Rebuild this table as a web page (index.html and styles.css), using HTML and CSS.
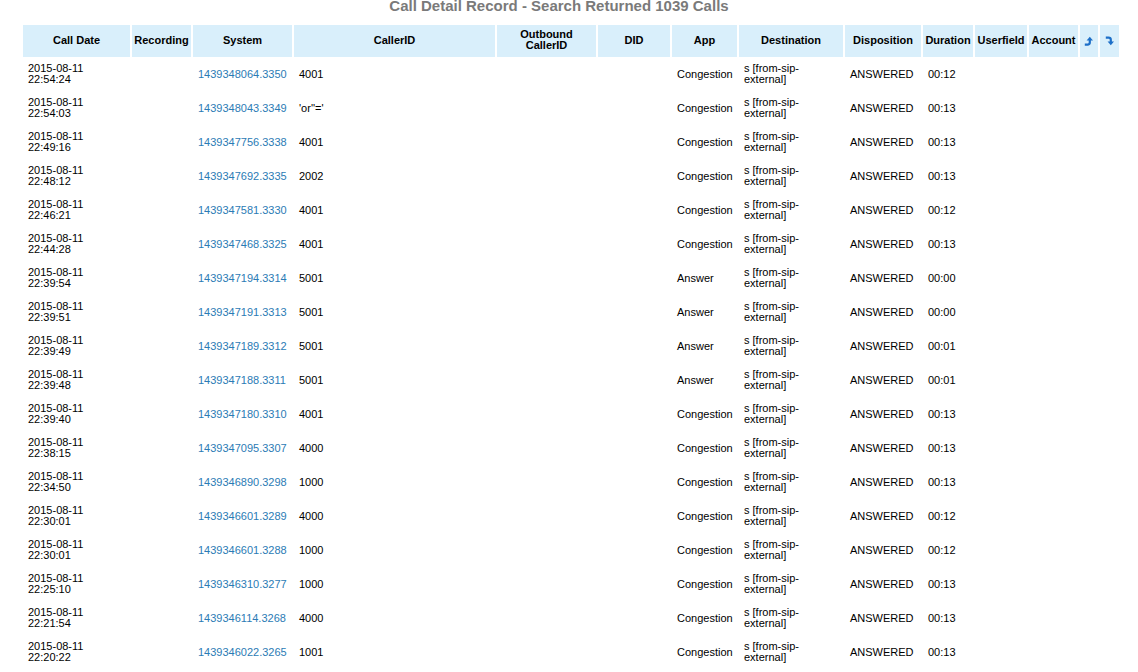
FILE: index.html
```html
<!DOCTYPE html>
<html>
<head>
<meta charset="utf-8">
<title>Call Detail Record</title>
<link rel="stylesheet" href="styles.css">
</head>
<body>
<div class="page">
  <div class="page-title">Call Detail Record - Search Returned 1039 Calls</div>
  <table class="cdr">
    <thead>
      <tr>
        <th class="c-date">Call Date</th>
        <th class="c-rec">Recording</th>
        <th class="c-sys">System</th>
        <th class="c-cid">CallerID</th>
        <th class="c-out">Outbound CallerID</th>
        <th class="c-did">DID</th>
        <th class="c-app">App</th>
        <th class="c-dst">Destination</th>
        <th class="c-disp">Disposition</th>
        <th class="c-dur">Duration</th>
        <th class="c-uf">Userfield</th>
        <th class="c-acc">Account</th>
        <th class="c-ico"><svg class="sort-icon" width="10" height="10" viewBox="0 0 10 10"><path d="M0.8 8.6 L3.6 8.6 Q5.8 8.6 5.8 6.4 L5.8 4" fill="none" stroke="#1d6fc8" stroke-width="2.2"/><path d="M2.6 4.6 L5.8 0.8 L9 4.6 Z" fill="#1d6fc8"/></svg></th>
        <th class="c-ico"><svg class="sort-icon" width="10" height="10" viewBox="0 0 10 10"><path d="M0.8 1.6 L3.6 1.6 Q5.8 1.6 5.8 3.8 L5.8 6" fill="none" stroke="#1d6fc8" stroke-width="2.2"/><path d="M2.6 5.4 L5.8 9.2 L9 5.4 Z" fill="#1d6fc8"/></svg></th>
      </tr>
    </thead>
    <tbody>
      <tr><td>2015-08-11 22:54:24</td><td></td><td><a href="#">1439348064.3350</a></td><td>4001</td><td></td><td></td><td>Congestion</td><td>s [from-sip-external]</td><td>ANSWERED</td><td>00:12</td><td></td><td></td><td></td><td></td></tr>
      <tr><td>2015-08-11 22:54:03</td><td></td><td><a href="#">1439348043.3349</a></td><td>'or''='</td><td></td><td></td><td>Congestion</td><td>s [from-sip-external]</td><td>ANSWERED</td><td>00:13</td><td></td><td></td><td></td><td></td></tr>
      <tr><td>2015-08-11 22:49:16</td><td></td><td><a href="#">1439347756.3338</a></td><td>4001</td><td></td><td></td><td>Congestion</td><td>s [from-sip-external]</td><td>ANSWERED</td><td>00:13</td><td></td><td></td><td></td><td></td></tr>
      <tr><td>2015-08-11 22:48:12</td><td></td><td><a href="#">1439347692.3335</a></td><td>2002</td><td></td><td></td><td>Congestion</td><td>s [from-sip-external]</td><td>ANSWERED</td><td>00:13</td><td></td><td></td><td></td><td></td></tr>
      <tr><td>2015-08-11 22:46:21</td><td></td><td><a href="#">1439347581.3330</a></td><td>4001</td><td></td><td></td><td>Congestion</td><td>s [from-sip-external]</td><td>ANSWERED</td><td>00:12</td><td></td><td></td><td></td><td></td></tr>
      <tr><td>2015-08-11 22:44:28</td><td></td><td><a href="#">1439347468.3325</a></td><td>4001</td><td></td><td></td><td>Congestion</td><td>s [from-sip-external]</td><td>ANSWERED</td><td>00:13</td><td></td><td></td><td></td><td></td></tr>
      <tr><td>2015-08-11 22:39:54</td><td></td><td><a href="#">1439347194.3314</a></td><td>5001</td><td></td><td></td><td>Answer</td><td>s [from-sip-external]</td><td>ANSWERED</td><td>00:00</td><td></td><td></td><td></td><td></td></tr>
      <tr><td>2015-08-11 22:39:51</td><td></td><td><a href="#">1439347191.3313</a></td><td>5001</td><td></td><td></td><td>Answer</td><td>s [from-sip-external]</td><td>ANSWERED</td><td>00:00</td><td></td><td></td><td></td><td></td></tr>
      <tr><td>2015-08-11 22:39:49</td><td></td><td><a href="#">1439347189.3312</a></td><td>5001</td><td></td><td></td><td>Answer</td><td>s [from-sip-external]</td><td>ANSWERED</td><td>00:01</td><td></td><td></td><td></td><td></td></tr>
      <tr><td>2015-08-11 22:39:48</td><td></td><td><a href="#">1439347188.3311</a></td><td>5001</td><td></td><td></td><td>Answer</td><td>s [from-sip-external]</td><td>ANSWERED</td><td>00:01</td><td></td><td></td><td></td><td></td></tr>
      <tr><td>2015-08-11 22:39:40</td><td></td><td><a href="#">1439347180.3310</a></td><td>4001</td><td></td><td></td><td>Congestion</td><td>s [from-sip-external]</td><td>ANSWERED</td><td>00:13</td><td></td><td></td><td></td><td></td></tr>
      <tr><td>2015-08-11 22:38:15</td><td></td><td><a href="#">1439347095.3307</a></td><td>4000</td><td></td><td></td><td>Congestion</td><td>s [from-sip-external]</td><td>ANSWERED</td><td>00:13</td><td></td><td></td><td></td><td></td></tr>
      <tr><td>2015-08-11 22:34:50</td><td></td><td><a href="#">1439346890.3298</a></td><td>1000</td><td></td><td></td><td>Congestion</td><td>s [from-sip-external]</td><td>ANSWERED</td><td>00:13</td><td></td><td></td><td></td><td></td></tr>
      <tr><td>2015-08-11 22:30:01</td><td></td><td><a href="#">1439346601.3289</a></td><td>4000</td><td></td><td></td><td>Congestion</td><td>s [from-sip-external]</td><td>ANSWERED</td><td>00:12</td><td></td><td></td><td></td><td></td></tr>
      <tr><td>2015-08-11 22:30:01</td><td></td><td><a href="#">1439346601.3288</a></td><td>1000</td><td></td><td></td><td>Congestion</td><td>s [from-sip-external]</td><td>ANSWERED</td><td>00:12</td><td></td><td></td><td></td><td></td></tr>
      <tr><td>2015-08-11 22:25:10</td><td></td><td><a href="#">1439346310.3277</a></td><td>1000</td><td></td><td></td><td>Congestion</td><td>s [from-sip-external]</td><td>ANSWERED</td><td>00:13</td><td></td><td></td><td></td><td></td></tr>
      <tr><td>2015-08-11 22:21:54</td><td></td><td><a href="#">1439346114.3268</a></td><td>4000</td><td></td><td></td><td>Congestion</td><td>s [from-sip-external]</td><td>ANSWERED</td><td>00:13</td><td></td><td></td><td></td><td></td></tr>
      <tr><td>2015-08-11 22:20:22</td><td></td><td><a href="#">1439346022.3265</a></td><td>1001</td><td></td><td></td><td>Congestion</td><td>s [from-sip-external]</td><td>ANSWERED</td><td>00:13</td><td></td><td></td><td></td><td></td></tr>
    </tbody>
  </table>
</div>
</body>
</html>
```
FILE: styles.css
```css
html, body {
  margin: 0;
  padding: 0;
  background: #ffffff;
}

body {
  font-family: "Liberation Sans", Arial, Helvetica, sans-serif;
  font-size: 11px;
  color: #000000;
}

.page {
  padding-left: 21px;
}

.page-title {
  width: 1076px;
  text-align: center;
  font-size: 15px;
  font-weight: bold;
  line-height: 12px;
  color: #7a7a7a;
  margin-bottom: 11px;
}

.cdr {
  table-layout: fixed;
  width: 1100px;
  border-collapse: separate;
  border-spacing: 2px;
}

.cdr th,
.cdr td {
  box-sizing: border-box;
  line-height: 11px;
  font-size: 11px;
  vertical-align: middle;
}

.cdr th {
  background: #d9effb;
  font-weight: bold;
  text-align: center;
  padding: 4px 2px 6px;
  height: 32px;
  white-space: normal;
}

.cdr td {
  text-align: left;
  padding: 4px 4px 6px 5px;
  height: 32px;
}

.cdr td a {
  color: #2b7bb5;
  text-decoration: none;
}

.c-date { width: 107px; }
.c-rec { width: 59px; }
.c-sys { width: 99px; }
.c-cid { width: 201px; }
.c-out { width: 99px; }
.c-did { width: 72px; }
.c-app { width: 65px; }
.c-dst { width: 104px; }
.c-disp { width: 76px; }
.c-dur { width: 50px; }
.c-uf { width: 52px; }
.c-acc { width: 49px; }
.c-ico { width: 18px; }
.c-ico:last-child { width: 19px; }

.cdr th.c-ico {
  padding: 0;
}

.sort-icon {
  display: block;
  margin: 0 auto;
}
```
